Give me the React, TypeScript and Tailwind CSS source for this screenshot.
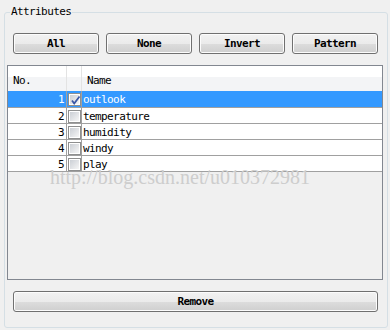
const attributes = ["outlook", "temperature", "humidity", "windy", "play"];
const actions = ["All", "None", "Invert", "Pattern"];

function Button({ label, wide }: { label: string; wide?: boolean }) {
  return (
    <button
      className={`${wide ? "w-[365px]" : "w-[86px]"} flex h-[21px] items-center justify-center rounded-[3px] border border-[#707070] bg-[linear-gradient(to_bottom,#f2f2f2_0%,#ebebeb_50%,#dddddd_51%,#cfcfcf_100%)] pt-[1px] font-bold text-black shadow-[inset_0_0_0_1px_#fcfcfc]`}
    >
      {label}
    </button>
  );
}

function CheckBox({ checked }: { checked: boolean }) {
  return (
    <span className="relative flex h-[13px] w-[13px] items-center justify-center border border-[#8e8f8f] bg-white">
      <span className="h-[9px] w-[9px] bg-gradient-to-br from-[#cbcfd5] to-[#f6f6f6]" />
      {checked && (
        <svg className="absolute left-[1px] top-[1px]" width="11" height="11" viewBox="0 0 11 11">
          <path d="M2 5.5 L4.2 8.5 L9.5 1.5" fill="none" stroke="#3b57a6" strokeWidth="1.8" />
        </svg>
      )}
    </span>
  );
}

export default function App() {
  return (
    <div className="relative h-[330px] w-[390px] overflow-hidden bg-[#f0f0f0] pl-[4px] pt-[6px] font-['DejaVu_Sans_Mono',monospace] text-[11px] leading-[12px] tracking-[-0.6px] text-black">
      <fieldset className="h-[322px] w-[384px] rounded-[3px] border border-[#d5dfe5]">
        <legend className="ml-[5px] px-[1px] leading-[12px]">Attributes</legend>

        <div className="ml-[8px] mt-[15px] flex gap-[7px]">
          {actions.map((a) => (
            <Button key={a} label={a} />
          ))}
        </div>

        <div className="ml-[2px] mt-[11px] h-[215px] w-[376px] border border-[#828790] bg-[#f0f0f0]">
          <div className="flex h-[25px] bg-[linear-gradient(to_bottom,#ffffff_0%,#ffffff_42%,#f3f4f6_43%,#f3f4f6_100%)]">
            <div className="w-[59px] border-r border-[#e3e3e3] pl-[5px] pt-[9px]">No.</div>
            <div className="w-[15px] border-r border-[#e3e3e3]" />
            <div className="flex-1 pl-[5px] pt-[9px]">Name</div>
          </div>
          {attributes.map((name, i) => {
            const selected = i === 0;
            return (
              <div
                key={name}
                className={`flex ${i === 0 ? "h-[17px]" : "h-[16px]"} border-b border-[#a0a0a0] ${
                  selected ? "bg-[#3399ff] text-white" : "bg-white"
                }`}
              >
                <div className="w-[59px] border-r border-[#a0a0a0] pr-[2px] pt-[3px] text-right">{i + 1}</div>
                <div className="w-[15px] border-r border-[#a0a0a0] pl-[1px] pt-[2px]">
                  <CheckBox checked={selected} />
                </div>
                <div className="flex-1 pl-[1px] pt-[3px]">{name}</div>
              </div>
            );
          })}
        </div>

        <div className="ml-[8px] mt-[11px]">
          <Button label="Remove" wide />
        </div>
      </fieldset>

      <div className="pointer-events-none absolute left-[50px] top-[167px] whitespace-nowrap font-['Liberation_Serif',serif] text-[20px] leading-[20px] tracking-normal text-[#cdcdcd]">
        http://blog.csdn.net/u010372981
      </div>
    </div>
  );
}
